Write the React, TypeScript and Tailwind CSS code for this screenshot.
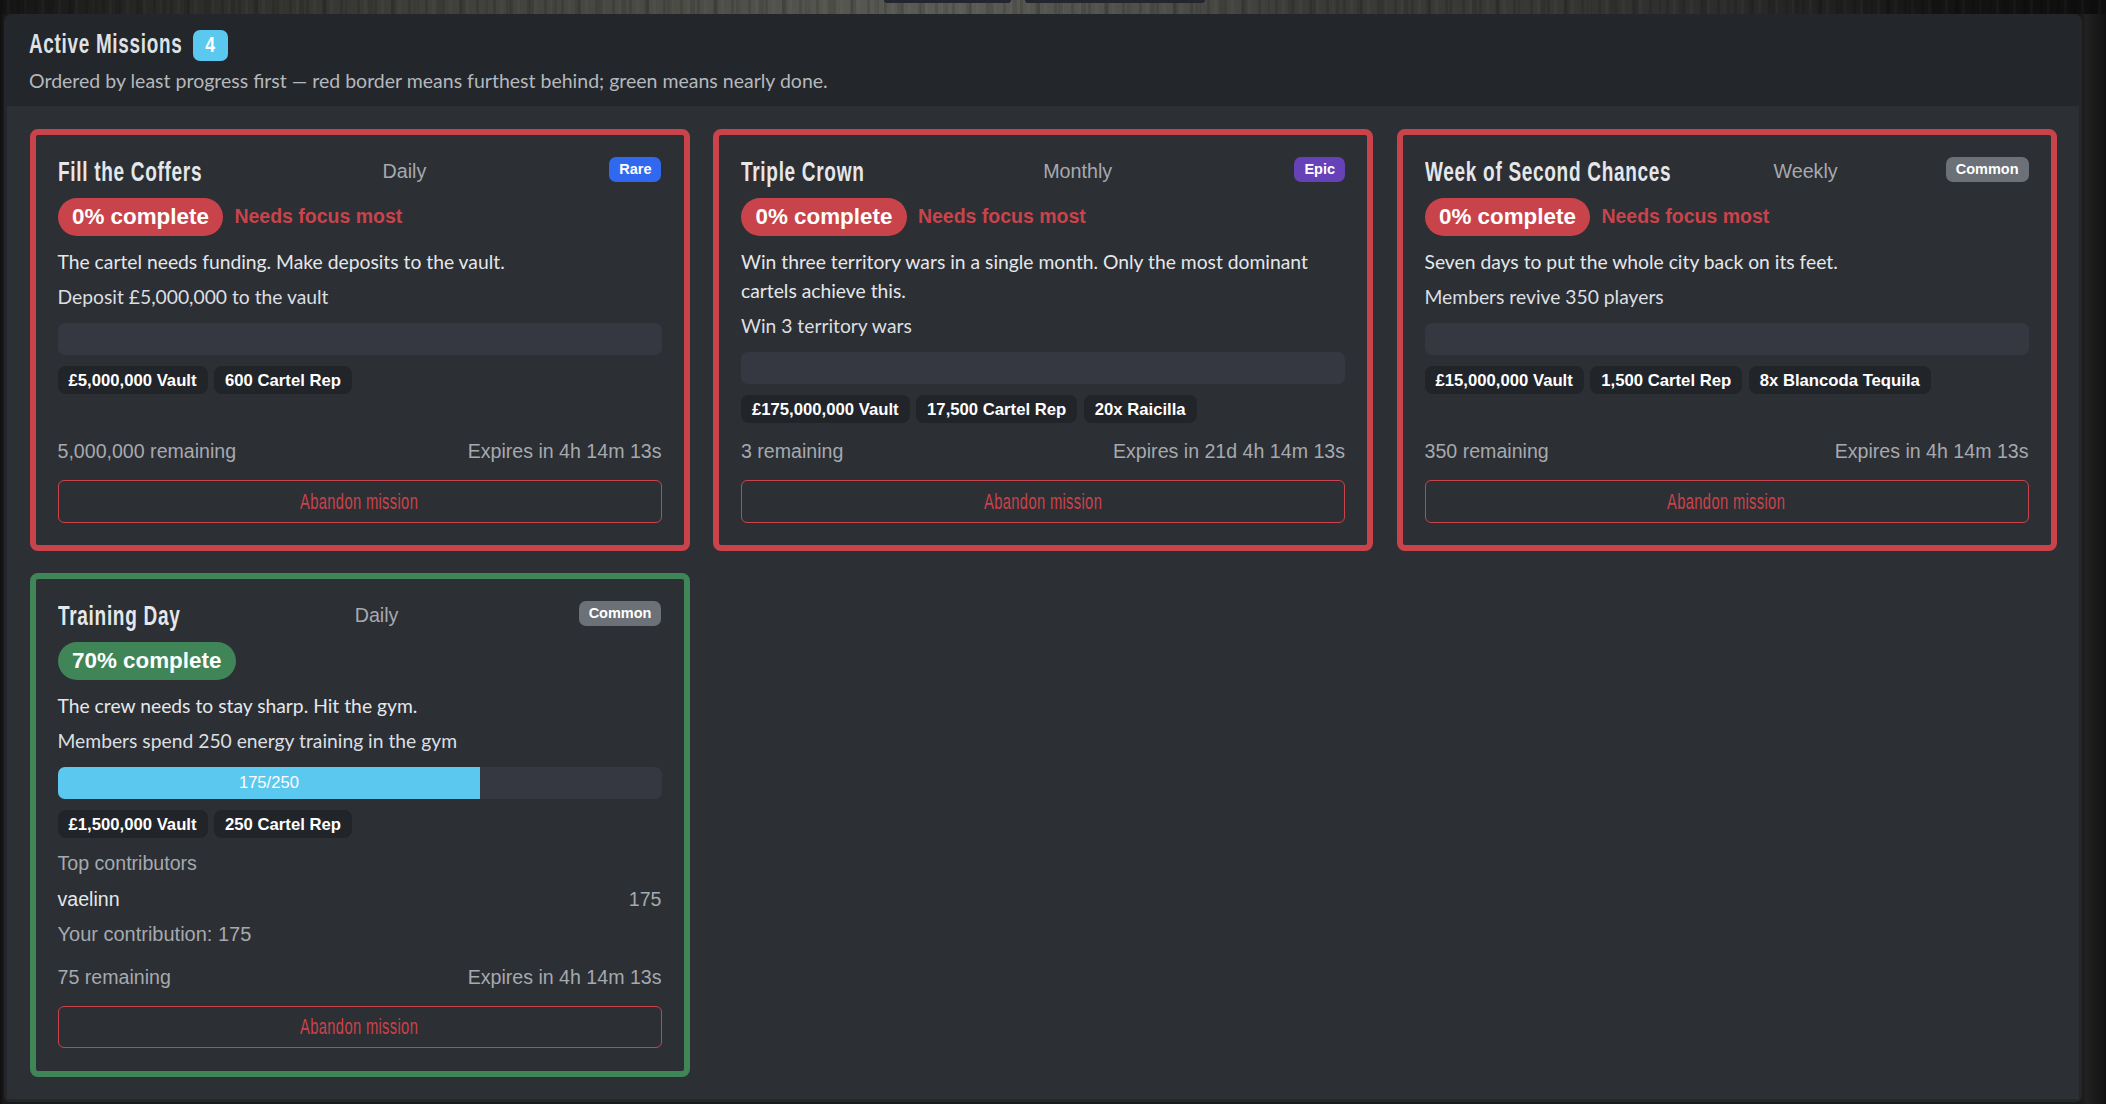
import React from "react";

type Mission = {
  title: string; titleW: string; cadence: string; rarity: string; rarityBg: string;
  pct: number; focus: boolean; desc: string; objective: string;
  rewards: string[]; remaining: string; expires: string; progress?: string;
  contributors?: boolean;
};

const missions: Mission[] = [
  { title: "Fill the Coffers", titleW: "w-[142px]", cadence: "Daily", rarity: "Rare", rarityBg: "bg-[#3069f0]", pct: 0, focus: true,
    desc: "The cartel needs funding. Make deposits to the vault.", objective: "Deposit £5,000,000 to the vault",
    rewards: ["£5,000,000 Vault", "600 Cartel Rep"], remaining: "5,000,000 remaining", expires: "Expires in 4h 14m 13s" },
  { title: "Triple Crown", titleW: "w-[120px]", cadence: "Monthly", rarity: "Epic", rarityBg: "bg-[#6741b8]", pct: 0, focus: true,
    desc: "Win three territory wars in a single month. Only the most dominant cartels achieve this.", objective: "Win 3 territory wars",
    rewards: ["£175,000,000 Vault", "17,500 Cartel Rep", "20x Raicilla"], remaining: "3 remaining", expires: "Expires in 21d 4h 14m 13s" },
  { title: "Week of Second Chances", titleW: "w-[241px]", cadence: "Weekly", rarity: "Common", rarityBg: "bg-[#6c7178]", pct: 0, focus: true,
    desc: "Seven days to put the whole city back on its feet.", objective: "Members revive 350 players",
    rewards: ["£15,000,000 Vault", "1,500 Cartel Rep", "8x Blancoda Tequila"], remaining: "350 remaining", expires: "Expires in 4h 14m 13s" },
  { title: "Training Day", titleW: "w-[117px]", cadence: "Daily", rarity: "Common", rarityBg: "bg-[#6c7178]", pct: 70, focus: false,
    desc: "The crew needs to stay sharp. Hit the gym.", objective: "Members spend 250 energy training in the gym",
    rewards: ["£1,500,000 Vault", "250 Cartel Rep"], remaining: "75 remaining", expires: "Expires in 4h 14m 13s", progress: "175/250", contributors: true },
];

const lato = "font-['Lato',sans-serif]";

function Card({ m }: { m: Mission }) {
  const red = m.focus;
  return (
    <div className={`flex flex-col rounded-[8px] border-[6px] bg-[#2c2f34] px-[22px] pt-[22px] pb-[22.5px] ${red ? "border-[#c9434b]" : "border-[#3f8558]"}`}>
      <div className="flex items-start justify-between h-[30px]">
        <div className={`${m.titleW} whitespace-nowrap`}>
          <span className="inline-block origin-left scale-x-[.68] tracking-[1px] text-[28px] leading-[30px] font-bold text-[#e5e7ea]">{m.title}</span>
        </div>
        <div className="text-[19.7px] leading-[28px] text-[#a6a9ae]">{m.cadence}</div>
        <div className={`${m.rarityBg} rounded-[7px] h-[25px] px-[10px] text-[14.5px] leading-[24px] font-bold text-white`}>{m.rarity}</div>
      </div>
      <div className="flex items-center gap-[11px] mt-[11px]">
        <div className={`${red ? "bg-[#c9434b]" : "bg-[#3f8558]"} rounded-full h-[38px] px-[14.5px] text-[22.4px] leading-[38px] font-bold text-white`}>{m.pct}% complete</div>
        {m.focus && <div className="text-[19.5px] font-bold text-[#c9434b]">Needs focus most</div>}
      </div>
      <div className={`${lato} text-[19.3px] leading-[29px] text-[#e5e7ea] mt-[10.5px]`}>{m.desc}</div>
      <div className={`${lato} text-[19.3px] leading-[29px] text-[#dcdfe2] mt-[6.5px]`}>{m.objective}</div>
      <div className="h-[32px] rounded-[7px] bg-[#353840] overflow-hidden mt-[12px] shrink-0">
        {m.progress && (
          <div className="h-full w-[70%] bg-[#5bc8ef] text-center text-[16.6px] leading-[32px] text-white">{m.progress}</div>
        )}
      </div>
      <div className="flex gap-[6.5px] mt-[11px]">
        {m.rewards.map((r) => (
          <div key={r} className="h-[28px] rounded-[8px] bg-[#212429] px-[11px] text-[16.7px] leading-[30px] font-bold text-white">{r}</div>
        ))}
      </div>
      {m.contributors && (
        <div className="mt-[8px] leading-[35.5px]">
          <div className="text-[19.6px] text-[#a6a9ae]">Top contributors</div>
          <div className="flex justify-between text-[19.6px]">
            <span className="text-[#e5e7ea]">vaelinn</span>
            <span className="text-[#a6a9ae]">175</span>
          </div>
          <div className="text-[20px] text-[#a6a9ae]">Your contribution: 175</div>
        </div>
      )}
      <div className={`flex justify-between items-center mt-auto text-[19.6px] leading-[28px] text-[#a6a9ae] ${m.contributors ? "pt-[10.5px]" : "pt-[14px]"}`}>
        <span>{m.remaining}</span>
        <span>{m.expires}</span>
      </div>
      <button className={`${m.contributors ? "mt-[14.5px]" : "mt-[15px]"} h-[42.5px] w-full rounded-[6px] border border-[#c9434b] text-[#c9434b] whitespace-nowrap pt-[2px]`}>
        <span className="inline-block scale-x-[.67] tracking-[.5px] text-[22px] leading-[26px]">Abandon mission</span>
      </button>
    </div>
  );
}

export default function App() {
  return (
    <div className="h-[1104px] overflow-hidden bg-[linear-gradient(90deg,#0f0f0f_0px,#1a1a1a_4px,#1a1a1a_2082px,#212121_2086px,#111111_2106px)] font-['Liberation_Sans',Arial,sans-serif]">
      <div className="h-[14px] flex items-start pl-[884px] gap-[14px] bg-[repeating-linear-gradient(90deg,rgba(0,0,0,.12)_0_3px,transparent_3px_7px,rgba(255,255,255,.025)_7px_10px,transparent_10px_17px),repeating-linear-gradient(90deg,rgba(0,0,0,.1)_0_5px,transparent_5px_23px),linear-gradient(90deg,#141414_0%,#2a2a28_8%,#3e3e3a_20%,#4c4c47_32%,#5c5c56_45%,#4e4e4a_55%,#3a3a38_62%,#383836_72%,#2c2c2c_82%,#141414_92%,#0e0e0e_100%)]">
        <div className="w-[127px] h-[3px] rounded-b-[3px] bg-[#23262f]" />
        <div className="w-[180px] h-[3px] rounded-b-[3px] bg-[#23262f]" />
      </div>
      <div className="ml-[4px] mr-[24px] rounded-t-[8px] rounded-b-[6px] border-x-[3px] border-b-[3px] border-[#23262b] bg-[#23262b]">
        <div className="h-[92px] pl-[22px] pt-[14px]">
          <div className="flex items-center h-[32px]">
            <div className="w-[153px] whitespace-nowrap">
              <span className="inline-block origin-left scale-x-[.7] tracking-[1px] text-[27px] leading-[32px] font-bold text-[#dfe1e4]">Active Missions</span>
            </div>
            <span className="ml-[11px] mt-[2px] flex items-center justify-center w-[35px] h-[31px] rounded-[7px] bg-[#5bc8ef] text-white">
              <span className="inline-block scale-x-[.8] text-[22px] leading-[22px] font-bold">4</span>
            </span>
          </div>
          <div className={`${lato} mt-[6px] text-[19.5px] leading-[29px] text-[#b5b8bc]`}>Ordered by least progress first — red border means furthest behind; green means nearly done.</div>
        </div>
        <div className="bg-[#2c2f34] grid grid-cols-3 gap-x-[23.5px] gap-y-[22px] px-[22.5px] pt-[23px] pb-[22px]">
          {missions.map((m) => <Card key={m.title} m={m} />)}
        </div>
      </div>
    </div>
  );
}
